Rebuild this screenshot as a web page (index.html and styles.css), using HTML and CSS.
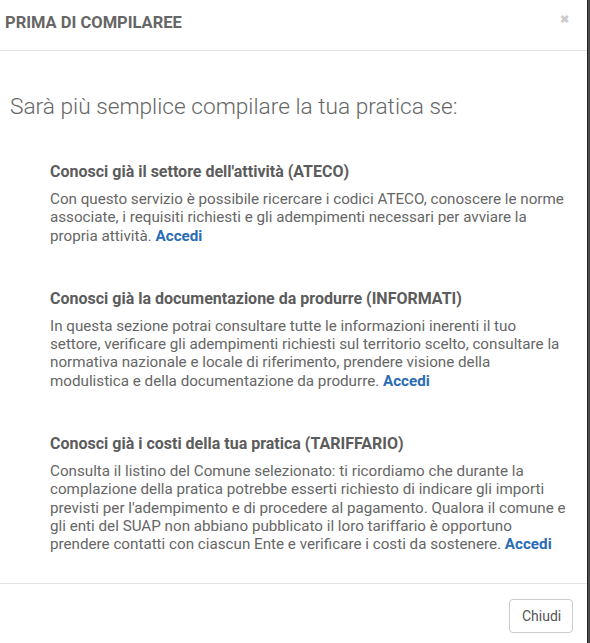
FILE: index.html
```html
<!DOCTYPE html>
<html lang="it">
<head>
    <meta charset="UTF-8">
    <title>Prima di compilare</title>
    <link rel="stylesheet" href="styles.css">
</head>
<body>
    <!-- Modal -->
    <div class="modal">
        <div class="modal-header">
            <h4 class="modal-title">PRIMA DI COMPILAREE</h4>
            <span class="close">&#10006;</span>
        </div>

        <div class="modal-body">
            <h3 class="lead">Sarà più semplice compilare la tua pratica se:</h3>

            <div class="item">
                <h5>Conosci già il settore dell'attività (ATECO)</h5>
                <p>Con questo servizio è possibile ricercare i codici ATECO, conoscere le norme associate, i requisiti richiesti e gli adempimenti necessari per avviare la propria attività. <a href="#">Accedi</a></p>
            </div>

            <div class="item">
                <h5>Conosci già la documentazione da produrre (INFORMATI)</h5>
                <p>In questa sezione potrai consultare tutte le informazioni inerenti il tuo settore, verificare gli adempimenti richiesti sul territorio scelto, consultare la normativa nazionale e locale di riferimento, prendere visione della modulistica e della documentazione da produrre. <a href="#">Accedi</a></p>
            </div>

            <div class="item">
                <h5>Conosci già i costi della tua pratica (TARIFFARIO)</h5>
                <p>Consulta il listino del Comune selezionato: ti ricordiamo che durante la complazione della pratica potrebbe esserti richiesto di indicare gli importi previsti per l'adempimento e di procedere al pagamento. Qualora il comune e gli enti del SUAP non abbiano pubblicato il loro tariffario è opportuno prendere contatti con ciascun Ente e verificare i costi da sostenere. <a href="#">Accedi</a></p>
            </div>
        </div>

        <div class="modal-footer">
            <button class="btn">Chiudi</button>
        </div>
    </div>
</body>
</html>
```

FILE: styles.css
```css
/* Page behind the modal */
body {
    margin: 0;
    background-color: #4d4d4d;
    font-family: Roboto, "Noto Sans", sans-serif;
    color: #666;
}

/* Modal box */
.modal {
    width: 587px;
    height: 643px;
    background-color: #fff;
    border-right: 1px solid #222;
    display: flex;
    flex-direction: column;
}

.modal-header {
    flex-shrink: 0;
    display: flex;
    align-items: flex-start;
    justify-content: space-between;
    height: 37px;
    padding: 13px 18px 0 5px;
    border-bottom: 1px solid #e5e5e5;
}

.modal-title {
    margin: 0;
    font-size: 16.5px;
    line-height: 19px;
    font-weight: 700;
    color: #666;
}

.close {
    font-size: 11px;
    line-height: 13px;
    color: #ccc;
    font-weight: 700;
}

.modal-body {
    flex: 1;
    padding: 43px 18px 0 10px;
}

.lead {
    margin: 0 0 42px;
    font-size: 22.7px;
    line-height: 26px;
    font-weight: 300;
    color: #666;
}

.item {
    padding-left: 40px;
    margin-bottom: 44px;
}

.item:last-child {
    margin-bottom: 0;
}

.item h5 {
    margin: 0 0 9px;
    font-size: 16px;
    line-height: 19px;
    font-weight: 700;
    color: #5c5c5c;
}

.item p {
    margin: 0;
    font-size: 15.2px;
    line-height: 18.3px;
    color: #666;
}

.item a {
    color: #2a6db5;
    font-weight: 700;
    text-decoration: none;
}

.modal-footer {
    flex-shrink: 0;
    display: flex;
    justify-content: flex-end;
    padding: 15px 14px 10px;
    border-top: 1px solid #e5e5e5;
    height: 34px;
}

.btn {
    font-family: inherit;
    font-size: 14px;
    color: #555;
    background-color: #fff;
    border: 1px solid #ccc;
    border-radius: 4px;
    padding: 6px 12px;
    width: 64px;
    height: 34px;
}
```
